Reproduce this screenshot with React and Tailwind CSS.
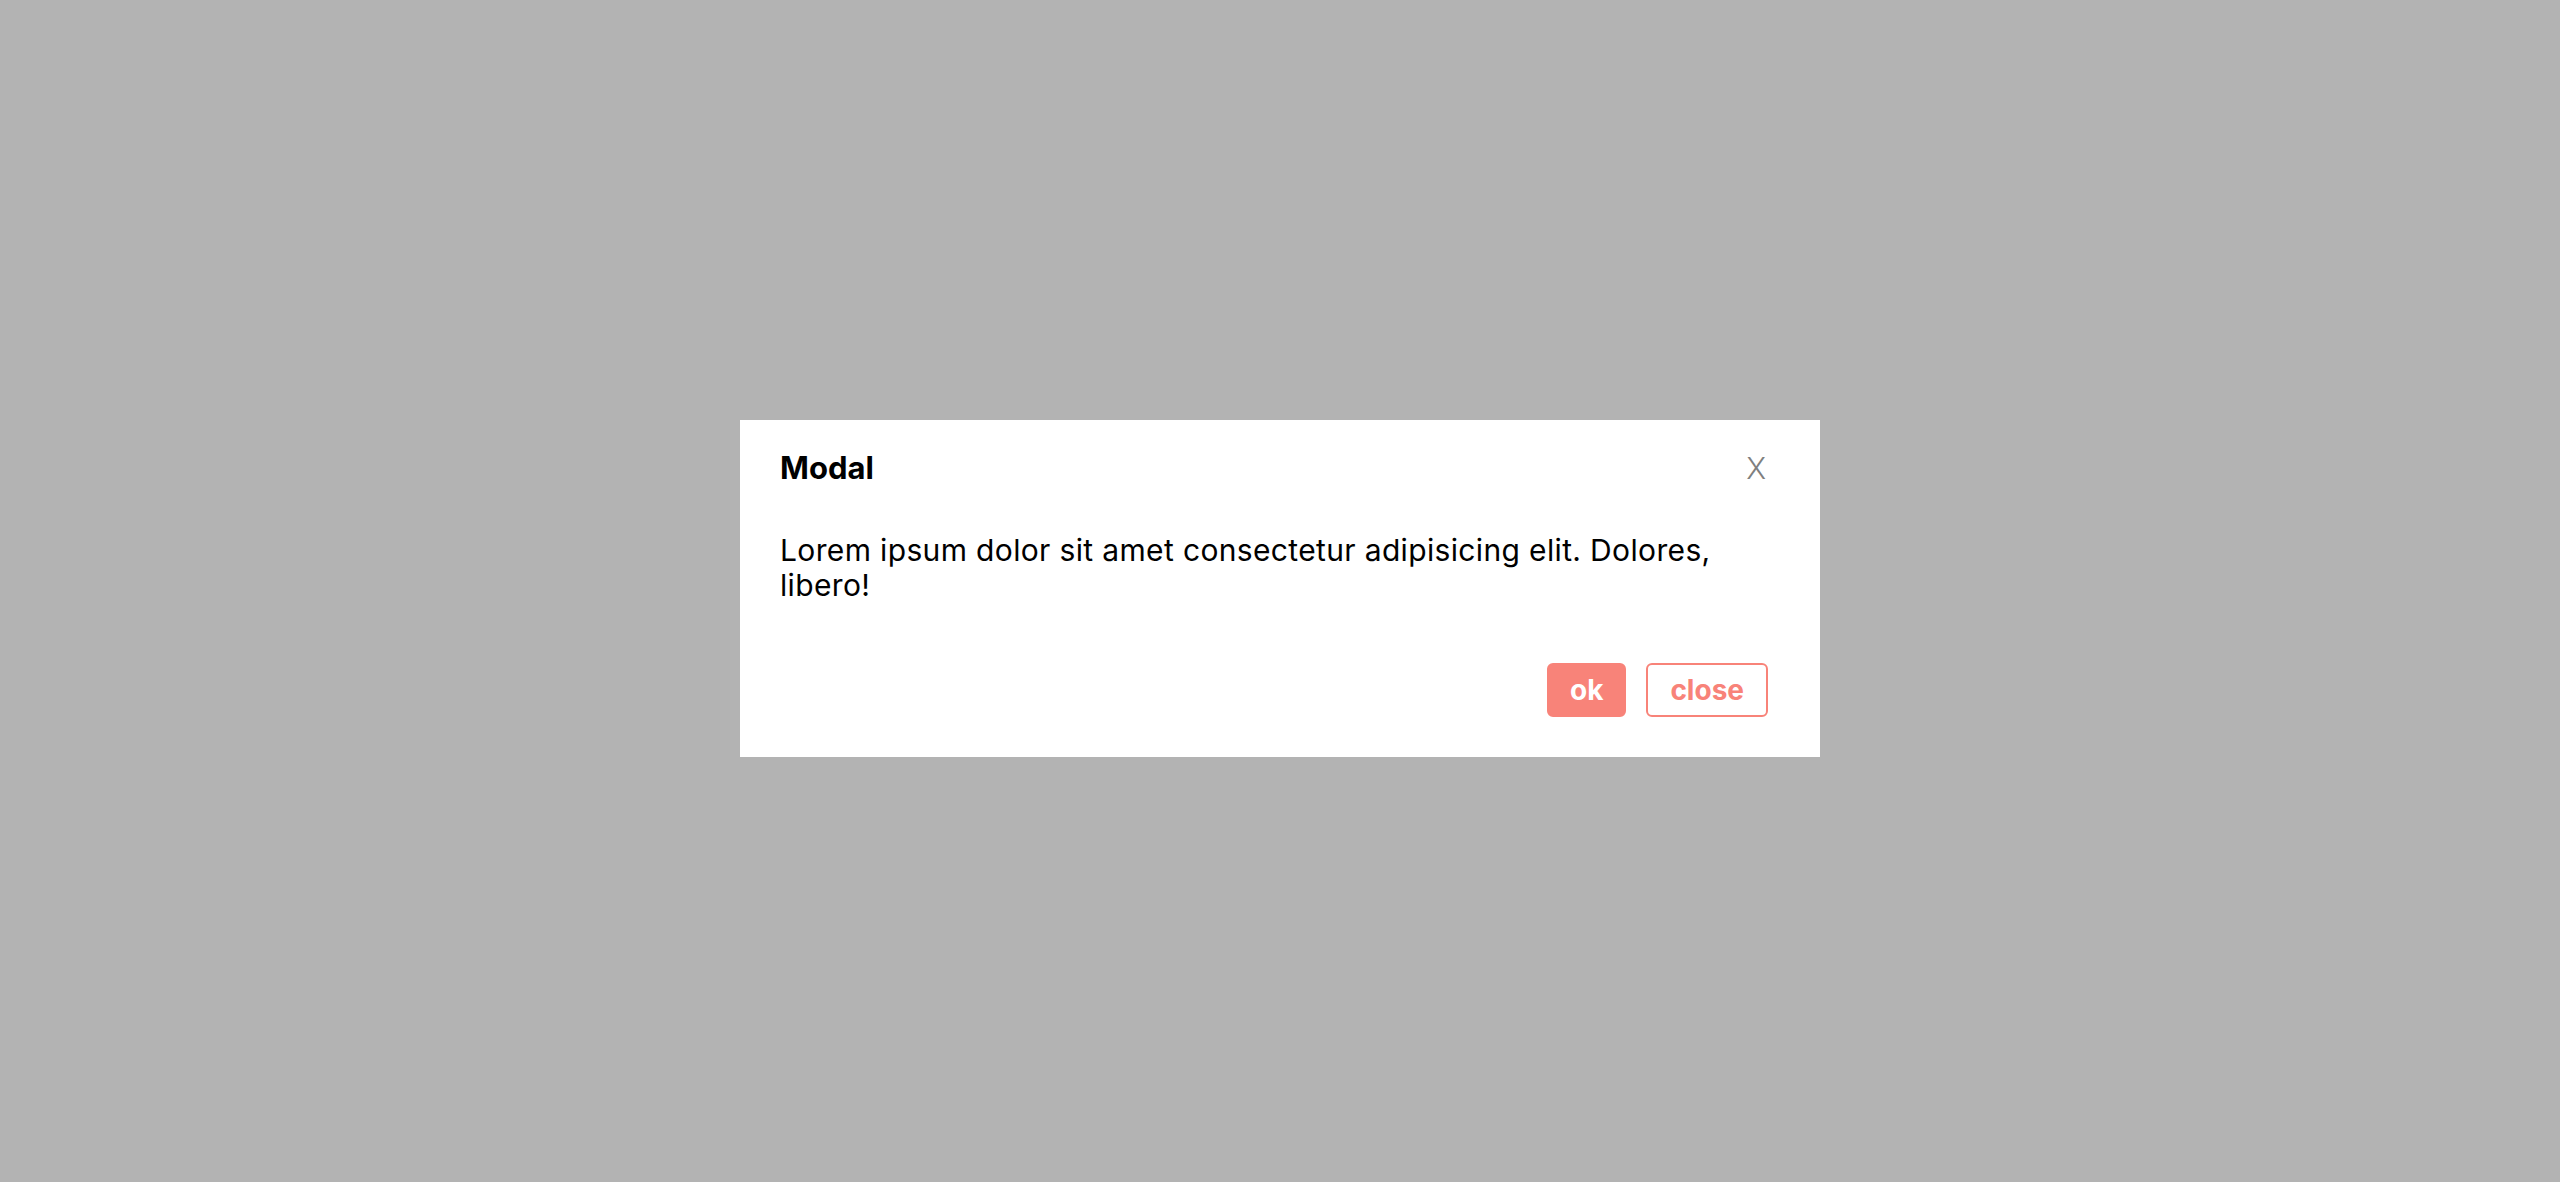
import React from "react";

const Modal = () => (
  <div className="w-[1080px] bg-white px-10 pt-[30px] pb-10">
    <div className="flex items-center justify-between">
      <h3 className="text-[31px] leading-[36px] font-bold text-black">Modal</h3>
      <button className="mr-[14px] text-[30px] leading-[36px] font-light text-[#7f7f7f]">X</button>
    </div>
    <p className="mt-[47px] text-[30px] leading-[35px] tracking-[0.35px] text-black">
      Lorem ipsum dolor sit amet consectetur adipisicing elit. Dolores, libero!
    </p>
    <div className="mt-[60px] mr-3 flex justify-end gap-5">
      <button className="rounded-[6px] border-2 border-[#f88379] bg-[#f88379] px-[21px] py-[10px] text-[28px] leading-[30px] font-bold text-white">
        ok
      </button>
      <button className="rounded-[6px] border-2 border-[#f88379] bg-white px-[22px] py-[10px] text-[28px] leading-[30px] font-bold text-[#f88379]">
        close
      </button>
    </div>
  </div>
);

export default function App() {
  return (
    <div
      className="flex h-[1182px] w-full items-center justify-center bg-[#b3b3b3] pb-[6px]"
      style={{ fontFamily: "Inter, 'Noto Sans', sans-serif" }}
    >
      <Modal />
    </div>
  );
}
